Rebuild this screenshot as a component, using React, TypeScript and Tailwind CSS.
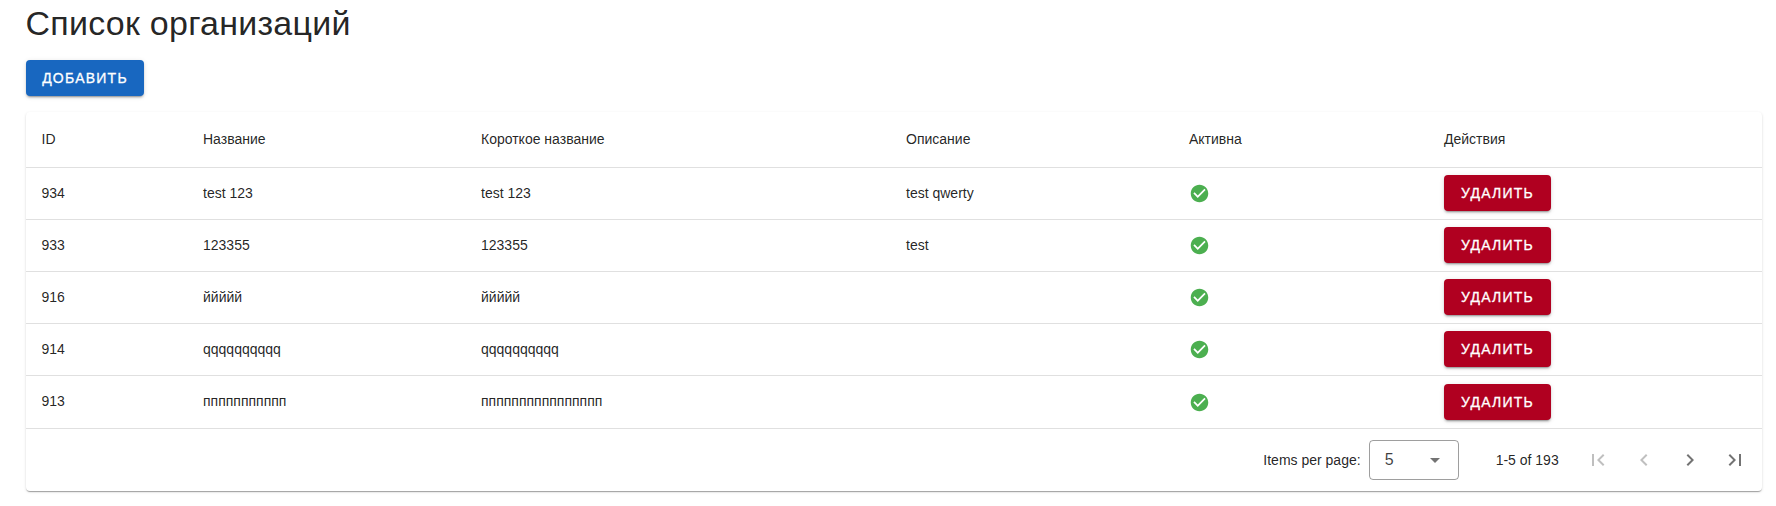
import React from "react";

type Org = { id: number; name: string; shortName: string; description: string };

const organizations: Org[] = [
  { id: 934, name: "test 123", shortName: "test 123", description: "test qwerty" },
  { id: 933, name: "123355", shortName: "123355", description: "test" },
  { id: 916, name: "ййййй", shortName: "ййййй", description: "" },
  { id: 914, name: "qqqqqqqqqq", shortName: "qqqqqqqqqq", description: "" },
  { id: 913, name: "ппппппппппп", shortName: "пппппппппппппппп", description: "" },
];

const icons = {
  check:
    "M12 2C6.5 2 2 6.5 2 12S6.5 22 12 22 22 17.5 22 12 17.5 2 12 2M10 17L5 12L6.41 10.59L10 14.17L17.59 6.58L19 8L10 17Z",
  menuDown: "M7,10L12,15L17,10H7Z",
  first: "M18.41,16.59L13.82,12L18.41,7.41L17,6L11,12L17,18L18.41,16.59M6,6H8V18H6V6Z",
  prev: "M15.41,16.58L10.83,12L15.41,7.41L14,6L8,12L14,18L15.41,16.58Z",
  next: "M8.59,16.58L13.17,12L8.59,7.41L10,6L16,12L10,18L8.59,16.58Z",
  last: "M5.59,7.41L10.18,12L5.59,16.59L7,18L13,12L7,6L5.59,7.41M16,6H18V18H16V6Z",
};

function Icon({ path, className }: { path: string; className: string }) {
  return (
    <svg viewBox="0 0 24 24" fill="currentColor" className={className} aria-hidden="true">
      <path d={path} />
    </svg>
  );
}

function Button({ className, children }: { className: string; children: React.ReactNode }) {
  return (
    <button
      className={`flex h-9 items-center justify-center rounded-[4px] text-sm font-medium tracking-[0.0892857em] text-white uppercase [-webkit-text-stroke:0.3px_white] shadow-[0_3px_1px_-2px_rgba(0,0,0,0.2),0_2px_2px_0_rgba(0,0,0,0.14),0_1px_5px_0_rgba(0,0,0,0.12)] ${className}`}
    >
      {children}
    </button>
  );
}

function PageButton({ path, disabled = false }: { path: string; disabled?: boolean }) {
  return (
    <button
      disabled={disabled}
      className={`flex h-[46px] w-[45.6px] items-center justify-center ${disabled ? "text-black/25" : "text-black/55"}`}
    >
      <Icon path={path} className="size-6" />
    </button>
  );
}

export default function App() {
  return (
    <main className="min-h-[506px] bg-white pr-[14px] pl-[26px] font-['Liberation_Sans',Arial,sans-serif] text-black/87">
      <h1 className="-ml-[0.5px] pt-[3px] text-[34px] leading-[40px] tracking-[0.0073529412em]">Список организаций</h1>
      <Button className="mt-[17px] w-[118px] bg-[#1867c0]">Добавить</Button>

      <section className="mt-4 h-[379px] rounded-[4px] bg-white text-sm shadow-[0_2px_1px_-1px_rgba(0,0,0,0.2),0_1px_1px_0_rgba(0,0,0,0.14),0_1px_3px_0_rgba(0,0,0,0.12)]">
        <table className="w-full table-fixed border-separate border-spacing-0 text-left">
          <colgroup>
            <col className="w-[161px]" />
            <col className="w-[278px]" />
            <col className="w-[425px]" />
            <col className="w-[283px]" />
            <col className="w-[255px]" />
            <col />
          </colgroup>
          <thead>
            <tr>
              {["ID", "Название", "Короткое название", "Описание", "Активна", "Действия"].map((title) => (
                <th key={title} className="h-14 border-b border-black/12 px-4 pt-0 pb-[2px] font-normal first:pl-[15.5px]">
                  {title}
                </th>
              ))}
            </tr>
          </thead>
          <tbody>
            {organizations.map((org) => (
              <tr
                key={org.id}
                className="group *:h-[52px] *:border-black/12 *:px-4 *:pt-0 *:pb-[2px] not-last:*:border-b"
              >
                <td>
                  <span className="-ml-[0.5px]">{org.id}</span>
                </td>
                <td>{org.name}</td>
                <td>{org.shortName}</td>
                <td>{org.description}</td>
                <td>
                  <Icon path={icons.check} className="mt-px size-[21px] text-[#4caf50] group-last:mt-[2px]" />
                </td>
                <td>
                  <Button className="w-[107px] bg-[#b00020] group-last:mt-[2px]">Удалить</Button>
                </td>
              </tr>
            ))}
          </tbody>
        </table>

        <div className="flex h-[63px] items-center justify-end border-t border-black/12 pr-1">
          <span className="pb-px">Items per page:</span>
          <div className="ml-2 flex h-10 w-[90px] items-center justify-between rounded-[4px] border border-black/38 pr-[11px] pl-[15px] text-base">
            <span className="pb-px text-black/75">5</span>
            <Icon path={icons.menuDown} className="size-6 text-black/55" />
          </div>
          <div className="ml-[37px] w-20 pb-px">1-5 of 193</div>
          <PageButton path={icons.first} disabled />
          <PageButton path={icons.prev} disabled />
          <PageButton path={icons.next} />
          <PageButton path={icons.last} />
        </div>
      </section>
    </main>
  );
}
